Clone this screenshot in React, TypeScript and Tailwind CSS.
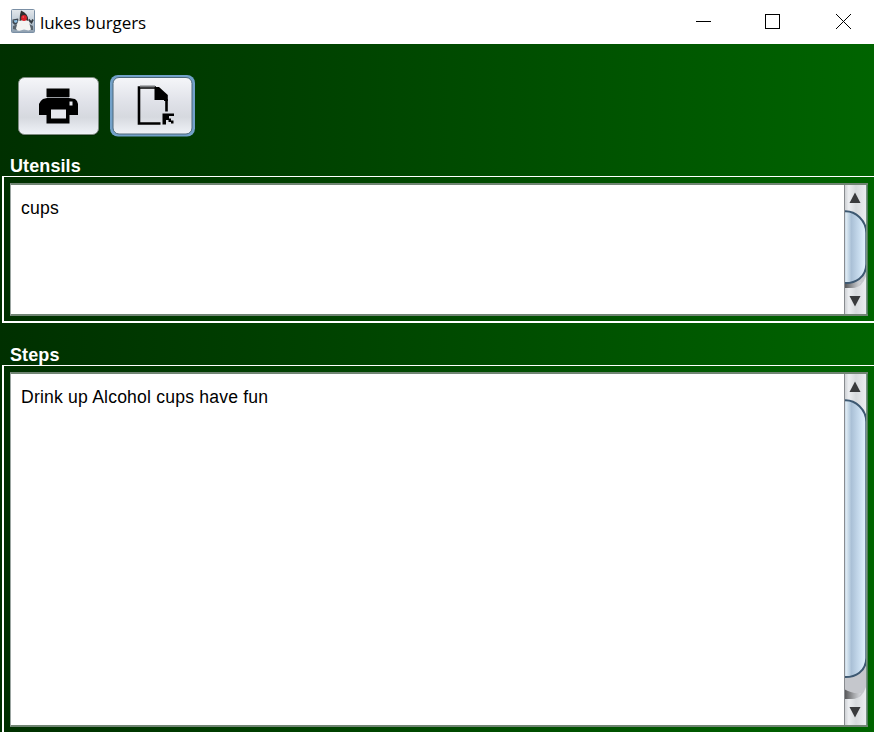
import React from 'react';

function DukeIcon() {
  return (
    <svg width="24" height="24" viewBox="0 0 24 24" className="block">
      <defs>
        <linearGradient id="duke-bg" x1="0" y1="0" x2="0" y2="1">
          <stop offset="0" stopColor="#e4e8ec" />
          <stop offset="0.5" stopColor="#bfcbd6" />
          <stop offset="1" stopColor="#8d9eae" />
        </linearGradient>
      </defs>
      <rect x="0.5" y="0.5" width="23" height="23" rx="1" fill="url(#duke-bg)" stroke="#7a8fa5" />
      <path d="M2 17L7 15L6 21L2 20ZM18 15L22 17L22 21L18 21Z" fill="#59636c" />
      <path d="M1.5 10.5L7 9.5L8.5 13L4 16L1.5 14Z" fill="#3c4650" />
      <path d="M2.5 11.5L6 11L6.5 13L4 14Z" fill="#8fc2e6" />
      <path d="M17.5 10.5L20.5 13.5L22 10.5" fill="none" stroke="#353b41" strokeWidth="1.8" />
      <path d="M8 10L6.5 14L5 19.5Q6 22.5 9.5 21.5L13 20.5L17.5 21.5L20 20.5L18.5 15L17 9Z" fill="#f4f4f2" />
      <path d="M10 1.5Q13.5 3 15.5 5.5Q17.5 8 17.5 12L13 10.5L8.5 12Q8.5 6 10 1.5Z" fill="#303030" />
      <circle cx="13" cy="9" r="2.9" fill="#dc2028" />
      <circle cx="12.3" cy="8" r="0.8" fill="#f36767" />
    </svg>
  );
}

function TitleBar() {
  return (
    <header className="flex h-11 shrink-0 items-center bg-white pl-[11px]">
      <div className="-mt-0.5"><DukeIcon /></div>
      <h1 className="ml-[5px] flex-1 pt-0.5 font-['Open_Sans',sans-serif] text-[17px] leading-6 tracking-[-0.1px] whitespace-nowrap text-black">lukes burgers</h1>
      <svg width="194" height="44" viewBox="0 0 194 44" className="block" fill="none" stroke="#000">
        <path d="M16 21.5H31" shapeRendering="crispEdges" />
        <rect x="85.5" y="14.5" width="14" height="14" shapeRendering="crispEdges" />
        <path d="M156 14L171 29M171 14L156 29" strokeWidth="1" />
      </svg>
    </header>
  );
}

function PrintButton() {
  return (
    <button aria-label="Print" className="block h-[62px] w-[86px]">
      <svg width="86" height="62" viewBox="0 0 86 62">
        <defs>
          <linearGradient id="button-face" x1="0" y1="0" x2="0" y2="1">
            <stop offset="0" stopColor="#f5f6f9" />
            <stop offset="0.45" stopColor="#dfe1e8" />
            <stop offset="0.7" stopColor="#d6d9df" />
            <stop offset="1" stopColor="#f0f3f8" />
          </linearGradient>
        </defs>
        <rect x="3" y="3.5" width="81" height="57" rx="6" fill="#002200" />
        <rect x="3.5" y="2.5" width="80" height="57" rx="6" fill="url(#button-face)" stroke="#7d8b80" />
        <path d="M31.5 13.5H54.5V22H31.5Z" />
        <path d="M32 23H54L60 24Q63 26 63 29V40H54.5V48.5H31.5V40H24V29Q25 26 28 24Z" />
        <path d="M36 34.5H51V43.5H36Z" fill="#e6e8ee" />
        <path d="M54.5 26.5H57.5V30.5H54.5Z" fill="#e6e8ee" />
        <path d="M32 22.5H54" stroke="#999ca1" />
      </svg>
    </button>
  );
}

function ExportButton() {
  return (
    <button aria-label="Open document" className="block h-[62px] w-[86px]">
      <svg width="86" height="62" viewBox="0 0 86 62">
        <rect x="0" y="0" width="85" height="61.5" rx="8" fill="#72a1c9" />
        <rect x="3" y="2.5" width="79" height="56.5" rx="6" fill="url(#button-face)" stroke="#4c6678" />
        <path d="M46 12.5H29V48.5H50.5M56.5 24V36.5" fill="none" stroke="#000" strokeWidth="2.6" />
        <path d="M30 11.5H45" stroke="#77797c" strokeWidth="2" />
        <path d="M44.5 12H49L57.8 20V26H54V25H44.5Z" />
        <path d="M52.5 38.5H64V41H59V43.5H61V45.5H63.5V48.5H61V47H58.5V45H56V49.5H52.5Z" />
      </svg>
    </button>
  );
}

function ScrollBar({ height, thumbEnd, id }: { height: number; thumbEnd: number; id: string }) {
  const buttonTop = height - 27;
  return (
    <svg width="24" height={height} viewBox={`0 0 24 ${height}`} className="block shrink-0">
      <defs>
        <linearGradient id={`${id}-track`}>
          <stop offset="0" stopColor="#c7cace" />
          <stop offset="0.2" stopColor="#eceef1" />
          <stop offset="0.5" stopColor="#d7dadd" />
          <stop offset="1" stopColor="#f0f1f4" />
        </linearGradient>
        <linearGradient id={`${id}-thumb`}>
          <stop offset="0" stopColor="#9bb4cb" />
          <stop offset="0.14" stopColor="#deeaf3" />
          <stop offset="0.25" stopColor="#c3d6e6" />
          <stop offset="0.36" stopColor="#aac0d6" />
          <stop offset="0.7" stopColor="#c8dcee" />
          <stop offset="1" stopColor="#e4f5ff" />
        </linearGradient>
        <linearGradient id={`${id}-shade`}>
          <stop offset="0" stopColor="#505052" />
          <stop offset="0.6" stopColor="#a7a9ac" />
          <stop offset="1" stopColor="#d8dadf" />
        </linearGradient>
        <clipPath id={`${id}-clip`}><rect width="22" height={height} /></clipPath>
      </defs>
      <rect width="24" height={height} fill={`url(#${id}-track)`} />
      <g clipPath={`url(#${id}-clip)`}>
        <path d={`M0 ${thumbEnd - 16}H22V${buttonTop - 11}Q18 ${buttonTop + 1} 9 ${buttonTop + 1}H0Z`} fill="#c5c7cc" />
        <path d={`M0 ${buttonTop - 9}Q8 ${buttonTop - 4} 17 ${buttonTop - 5}Q14 ${buttonTop + 1} 8 ${buttonTop + 1}H0Z`} fill={`url(#${id}-shade)`} />
        <path d={`M-1 26.5C12 25 22.3 36 22.3 48V${thumbEnd - 20}C22 ${thumbEnd - 7} 12 ${thumbEnd} -1 ${thumbEnd - 1}Z`} fill={`url(#${id}-thumb)`} stroke="#3d5871" strokeWidth="2" />
      </g>
      <path d="M11 7.5L16.5 18H5.5Z" fill="#393a3c" />
      <path d={`M5.5 ${height - 18}H16.5L11 ${height - 7.5}Z`} fill="#393a3c" />
      <path d={`M0.5 0V${height}`} stroke="#898c90" />
      <path d={`M22.5 0V${height}`} stroke="#779482" />
      <path d={`M23.5 0V${height}`} stroke="#517d5a" />
    </svg>
  );
}

export default function App() {
  return (
    <div className="flex h-[732px] w-[874px] flex-col overflow-hidden bg-linear-to-r from-[#003000] to-[#006400] font-['Liberation_Sans',Arial,sans-serif]">
      <TitleBar />
      <nav className="flex h-[109px] shrink-0 gap-[9px] pt-[31px] pl-[15px]">
        <PrintButton />
        <ExportButton />
      </nav>
      <section className="h-[189px] shrink-0">
        <h2 className="h-[23px] pt-0.5 pl-[10px] text-[18px] leading-[22px] font-bold tracking-[0.1px] text-white">Utensils</h2>
        <div className="ml-[2px] h-[147px] border-t border-b-2 border-l-2 border-white pt-1.5 pl-[6px]">
          <div className="flex h-[133px] w-[858px] border-t-2 border-b-2 border-l border-t-[#718574] border-b-[#718574] border-l-[#9ba5a1] bg-white">
            <p className="flex-1 pt-3 pl-[10px] text-[17.6px] leading-[22px] tracking-[0.19px] text-black">cups</p>
            <ScrollBar height={129} thumbEnd={99} id="utensils" />
          </div>
        </div>
      </section>
      <section className="flex-1">
        <h2 className="h-[23px] pt-0.5 pl-[10px] text-[18px] leading-[22px] font-bold tracking-[0.1px] text-white">Steps</h2>
        <div className="ml-[2px] h-[367px] border-t border-l-2 border-white pt-1.5 pl-[6px]">
          <div className="flex h-[355px] w-[858px] border-t-2 border-b-2 border-l border-t-[#718574] border-b-[#718574] border-l-[#9ba5a1] bg-white">
            <p className="flex-1 pt-3 pl-[10px] text-[17.6px] leading-[22px] tracking-[0.19px] text-black">Drink up Alcohol cups have fun</p>
            <ScrollBar height={351} thumbEnd={304} id="steps" />
          </div>
        </div>
      </section>
    </div>
  );
}
